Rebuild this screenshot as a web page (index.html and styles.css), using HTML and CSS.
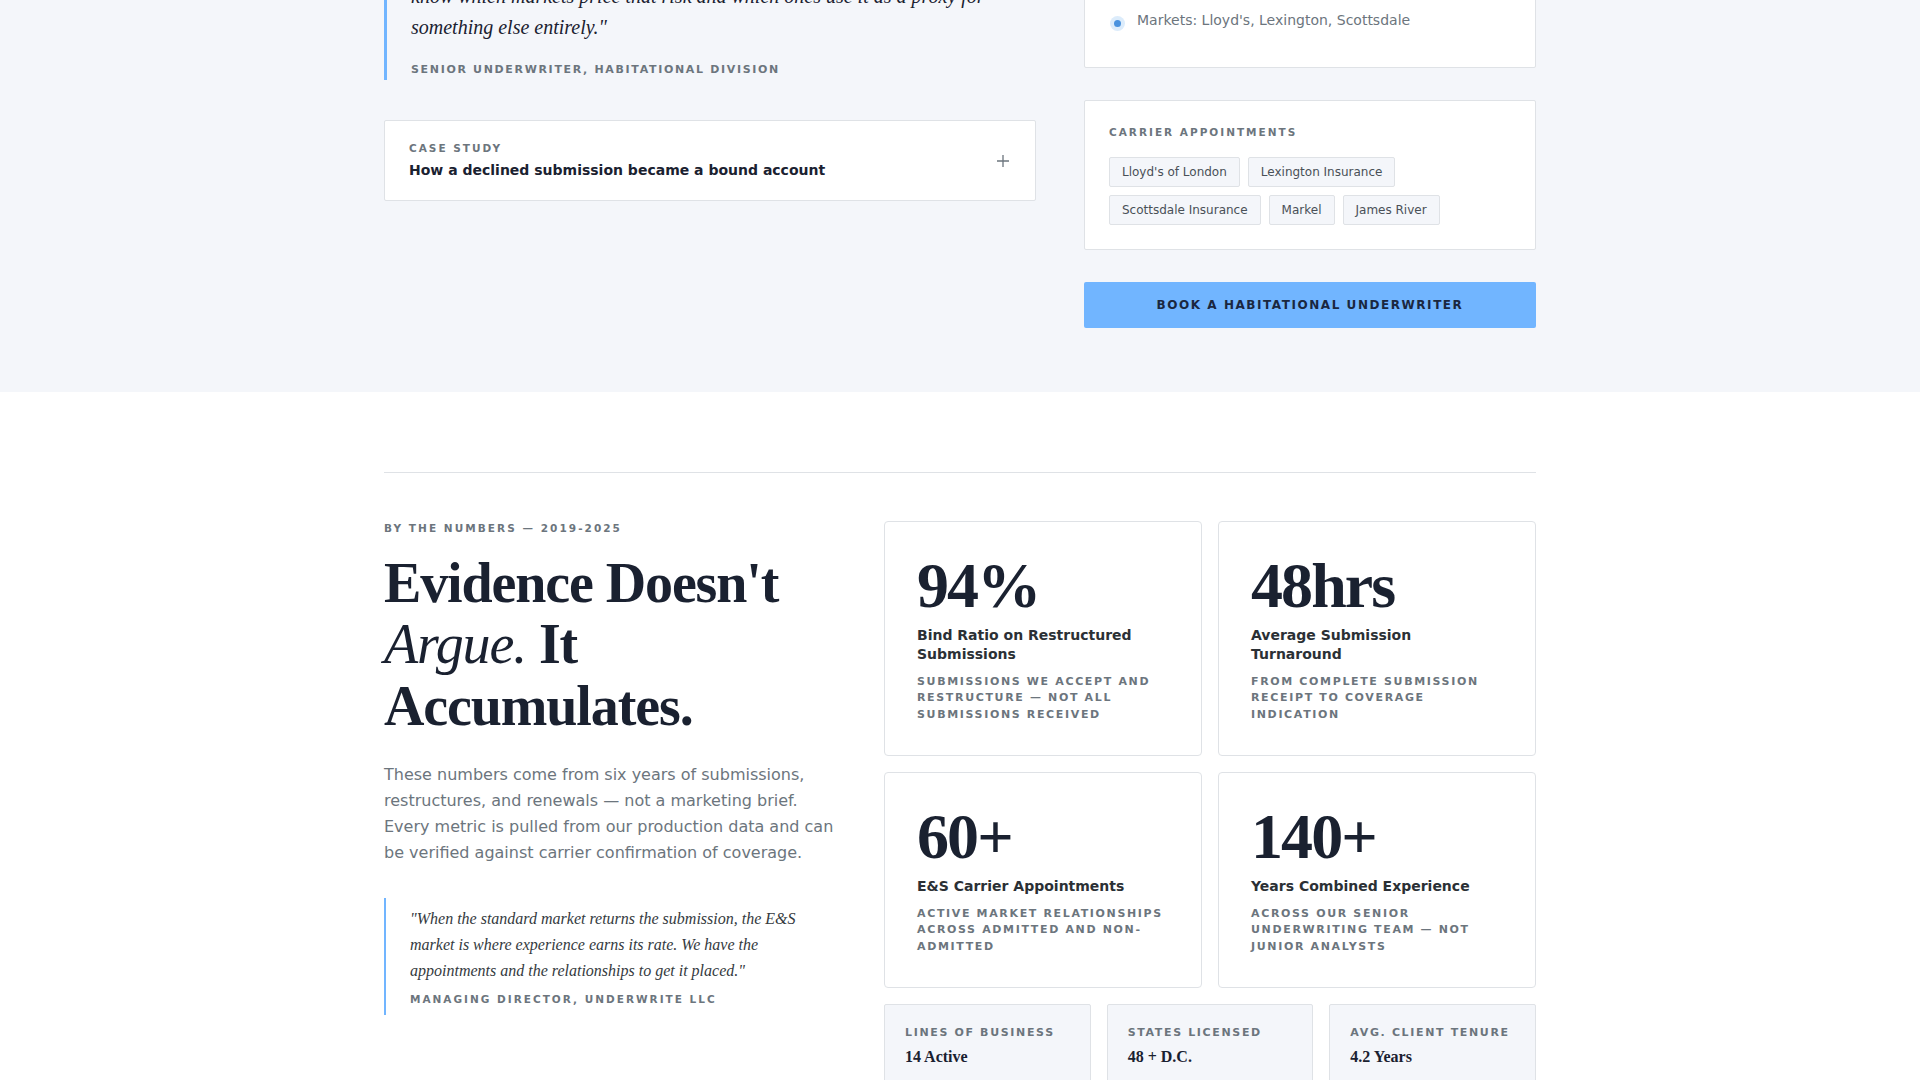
FILE: index.html
```html
<!DOCTYPE html>
<html lang="en">

<head>
    <meta charset="UTF-8">
    <meta name="viewport" content="width=device-width, initial-scale=1.0">
    <title>Underwrite LLC - Habitational</title>
    <link rel="stylesheet" href="styles.css">
</head>

<body>
    <!-- habitational program, page is scrolled so the top is cut off -->
    <section class="program">
        <div class="container program-grid">
            <div class="program-main">
                <blockquote class="pull-quote">
                    <p>know which markets price that risk and which ones use it as a proxy for something else entirely."</p>
                    <cite>Senior Underwriter, Habitational Division</cite>
                </blockquote>
                <div class="case-card">
                    <div>
                        <div class="case-label">Case Study</div>
                        <div class="case-title">How a declined submission became a bound account</div>
                    </div>
                    <span class="case-toggle">
                        <svg width="14" height="14" viewBox="0 0 14 14"><path d="M7 1v12M1 7h12" stroke="#6c757d" stroke-width="1.3" fill="none"/></svg>
                    </span>
                </div>
            </div>
            <aside class="program-side">
                <div class="side-card side-card-list">
                    <div class="market-row"><span class="market-dot"></span>Markets: Lloyd's, Lexington, Scottsdale</div>
                </div>
                <div class="side-card">
                    <div class="side-label">Carrier Appointments</div>
                    <div class="tag-list">
                        <span class="tag">Lloyd's of London</span>
                        <span class="tag">Lexington Insurance</span>
                        <span class="tag">Scottsdale Insurance</span>
                        <span class="tag">Markel</span>
                        <span class="tag">James River</span>
                    </div>
                </div>
                <a href="#" class="book-btn">Book a Habitational Underwriter</a>
            </aside>
        </div>
    </section>

    <section class="numbers">
        <div class="container numbers-inner">
            <div class="numbers-grid">
                <div class="numbers-intro">
                    <div class="eyebrow">By the Numbers — 2019-2025</div>
                    <h2>Evidence Doesn't <em>Argue.</em> It Accumulates.</h2>
                    <p class="intro-text">These numbers come from six years of submissions, restructures, and renewals — not a marketing brief. Every metric is pulled from our production data and can be verified against carrier confirmation of coverage.</p>
                    <blockquote class="side-quote">
                        <p>"When the standard market returns the submission, the E&amp;S market is where experience earns its rate. We have the appointments and the relationships to get it placed."</p>
                        <cite>Managing Director, Underwrite LLC</cite>
                    </blockquote>
                </div>
                <div class="numbers-data">
                    <div class="stat-grid">
                        <div class="stat-card">
                            <div class="stat-value">94%</div>
                            <div class="stat-label">Bind Ratio on Restructured Submissions</div>
                            <div class="stat-note">Submissions we accept and restructure — not all submissions received</div>
                        </div>
                        <div class="stat-card">
                            <div class="stat-value">48hrs</div>
                            <div class="stat-label">Average Submission Turnaround</div>
                            <div class="stat-note">From complete submission receipt to coverage indication</div>
                        </div>
                        <div class="stat-card">
                            <div class="stat-value">60+</div>
                            <div class="stat-label">E&amp;S Carrier Appointments</div>
                            <div class="stat-note">Active market relationships across admitted and non-admitted</div>
                        </div>
                        <div class="stat-card">
                            <div class="stat-value">140+</div>
                            <div class="stat-label">Years Combined Experience</div>
                            <div class="stat-note">Across our senior underwriting team — not junior analysts</div>
                        </div>
                    </div>
                    <div class="mini-grid">
                        <div class="mini-card">
                            <div class="mini-label">Lines of Business</div>
                            <div class="mini-value">14 Active</div>
                        </div>
                        <div class="mini-card">
                            <div class="mini-label">States Licensed</div>
                            <div class="mini-value">48 + D.C.</div>
                        </div>
                        <div class="mini-card">
                            <div class="mini-label">Avg. Client Tenure</div>
                            <div class="mini-value">4.2 Years</div>
                        </div>
                    </div>
                </div>
            </div>
        </div>
    </section>
</body>

</html>
```

FILE: styles.css
```css
* {
    margin: 0;
    padding: 0;
    box-sizing: border-box
}

html,
body {
    height: 1080px;
    overflow: hidden
}

body {
    font-family: "DejaVu Sans", sans-serif;
    background: #fff;
    color: #1a2130
}

.container {
    width: 1152px;
    margin: 0 auto
}

/* program section */
.program {
    background: #f4f6fa;
    height: 392px;
    overflow: hidden
}

.program-grid {
    display: grid;
    grid-template-columns: 652px 452px;
    gap: 48px;
    margin-top: -19px
}

.pull-quote {
    border-left: 3px solid #71b5ff;
    padding: 0 0 2.5px 24px;
    margin-bottom: 40px
}

.pull-quote p {
    font-family: "Liberation Serif", serif;
    font-style: italic;
    font-size: 20px;
    line-height: 31px
}

.pull-quote cite,
.side-quote cite {
    display: block;
    font-style: normal;
    font-weight: 700;
    text-transform: uppercase;
    color: #6c757d
}

.pull-quote cite {
    font-size: 11px;
    letter-spacing: 1.67px;
    margin-top: 18.5px;
    line-height: 16px
}

.case-card {
    background: #fff;
    border: 1px solid #dfe2e6;
    border-radius: 2px;
    height: 81px;
    padding: 0 24px;
    display: flex;
    align-items: center;
    justify-content: space-between
}

.case-label {
    font-size: 10.5px;
    font-weight: 700;
    letter-spacing: .19em;
    text-transform: uppercase;
    color: #6c757d;
    margin-bottom: 6px
}

.case-title {
    font-size: 14px;
    font-weight: 700;
    line-height: 20px
}

.case-toggle {
    display: flex;
    margin-right: 1px
}

.program-side {
    display: flex;
    flex-direction: column;
    gap: 32px
}

.side-card {
    background: #fff;
    border: 1px solid #dfe2e6;
    border-radius: 2px;
    padding: 24px
}

.side-card-list {
    padding: 27px 24px 36px
}

.market-row {
    display: flex;
    align-items: flex-start;
    gap: 16px;
    font-size: 14px;
    line-height: 22px;
    color: #6c757d
}

.market-dot {
    width: 7px;
    height: 7px;
    margin-left: 5px;
    margin-top: 10.5px;
    border-radius: 50%;
    background: #4a92de;
    box-shadow: 0 0 0 4px #dcecfb
}

.side-label {
    font-size: 10.5px;
    line-height: 15px;
    font-weight: 700;
    letter-spacing: 2px;
    text-transform: uppercase;
    color: #6c757d;
    margin-bottom: 17px
}

.tag-list {
    display: flex;
    flex-wrap: wrap;
    gap: 8px
}

.tag {
    font-size: 12px;
    line-height: 18px;
    padding: 5px 12px;
    background: #f4f6fa;
    border: 1px solid #dfe2e6;
    border-radius: 2px;
    color: #495057
}

.book-btn {
    display: block;
    height: 46px;
    line-height: 46px;
    text-align: center;
    background: #71b5ff;
    border-radius: 2px;
    color: #1a2740;
    font-size: 12px;
    font-weight: 700;
    letter-spacing: 1.55px;
    text-transform: uppercase;
    text-decoration: none
}

/* by the numbers */
.numbers-inner {
    padding-top: 80px
}

.numbers-grid {
    border-top: 1px solid #dfe2e6;
    padding-top: 48px;
    display: grid;
    grid-template-columns: 452px 652px;
    gap: 48px
}

.eyebrow {
    font-size: 10.5px;
    line-height: 14px;
    font-weight: 700;
    letter-spacing: 2.05px;
    text-transform: uppercase;
    color: #6c757d;
    margin-bottom: 17.7px
}

.numbers-intro h2 {
    font-family: "Liberation Serif", serif;
    font-size: 56px;
    font-weight: 700;
    line-height: 1.1;
    letter-spacing: -.02em;
    margin-bottom: 24.3px
}

.numbers-intro h2 em {
    font-weight: 400
}

.intro-text {
    font-size: 16px;
    line-height: 26px;
    color: #6c757d;
    margin-bottom: 32px
}

.side-quote {
    border-left: 2px solid #71b5ff;
    padding: 8px 0 8px 24px
}

.side-quote p {
    font-family: "Liberation Serif", serif;
    font-style: italic;
    font-size: 16px;
    line-height: 26px;
    color: #343a40
}

.side-quote cite {
    font-size: 10.5px;
    letter-spacing: 2px;
    margin-top: 7.5px;
    line-height: 16px
}

.stat-grid {
    display: grid;
    grid-template-columns: 1fr 1fr;
    gap: 16px
}

.stat-card {
    border: 1px solid #dfe2e6;
    border-radius: 4px;
    padding: 32px
}

.stat-value {
    font-family: "Liberation Serif", serif;
    font-size: 64px;
    font-weight: 700;
    line-height: 1;
    letter-spacing: -.03em;
    margin-bottom: 8px
}

.stat-label {
    font-size: 14px;
    font-weight: 700;
    line-height: 18.9px;
    color: #2b3035;
    margin-bottom: 9.7px
}

.stat-note {
    font-size: 11px;
    font-weight: 700;
    letter-spacing: .15em;
    line-height: 16.5px;
    text-transform: uppercase;
    color: #6c757d
}

.mini-grid {
    display: grid;
    grid-template-columns: repeat(3, 1fr);
    gap: 16px;
    margin-top: 16px
}

.mini-card {
    background: #f4f6fa;
    border: 1px solid #dfe2e6;
    border-radius: 2px;
    padding: 20px
}

.mini-label {
    font-size: 11px;
    line-height: 15px;
    font-weight: 700;
    letter-spacing: .15em;
    text-transform: uppercase;
    color: #6c757d;
    margin-bottom: 8px
}

.mini-value {
    font-family: "Liberation Serif", serif;
    font-size: 16px;
    font-weight: 700
}
```
